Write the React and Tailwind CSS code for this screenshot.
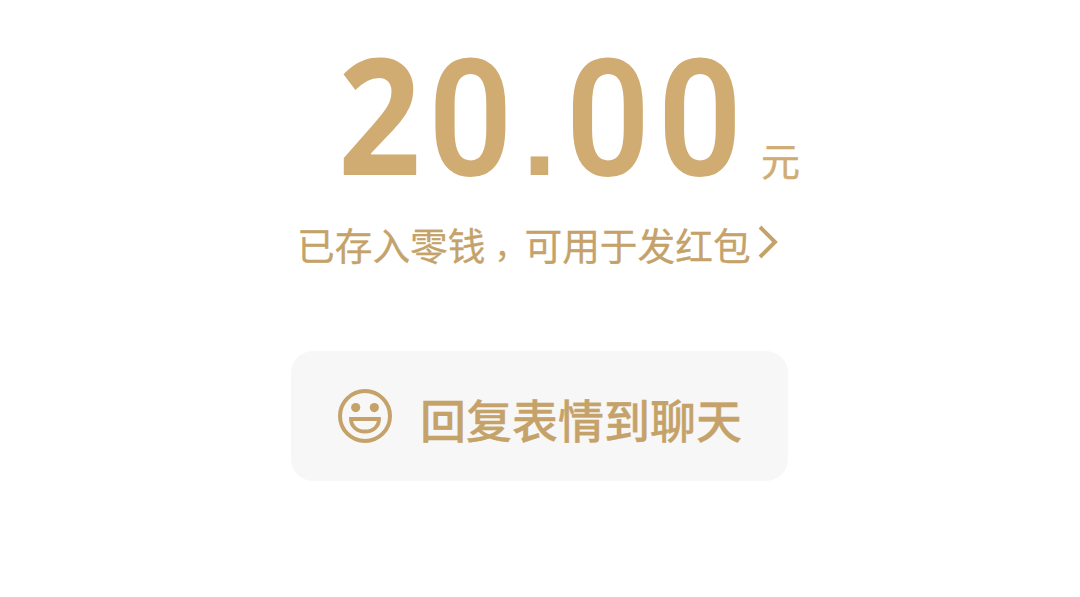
const App = () => {
    return (
        <div className="flex h-[597px] w-[1080px] flex-col bg-white font-['Noto_Sans_CJK_SC',sans-serif] text-[#c4a269] antialiased">
            {/* Amount */}
            <div className="mt-[33px] flex h-[172px] items-start pl-[335px] text-[#d0ac73]">
                <div className="flex w-[412px] items-start font-['Roboto',sans-serif] text-[164px] leading-[172px] font-[560]">
                    <span className="flex w-[89px] scale-x-[0.9] justify-center font-['Open_Sans',sans-serif] text-[161px] leading-[160px] font-[670]">2</span>
                    <span className="flex w-[93px] scale-x-[0.9] justify-center">0</span>
                    <span className="mt-[13px] flex w-[45px] justify-center font-['Liberation_Sans',sans-serif] text-[124px] font-bold">.</span>
                    <span className="flex w-[92px] scale-x-[0.9] justify-center">0</span>
                    <span className="flex w-[92px] scale-x-[0.9] justify-center">0</span>
                </div>
                <span className="mt-[98px] ml-[14px] text-[39px] leading-[56px] [-webkit-text-stroke:0.4px]">元</span>
            </div>

            {/* Wallet link */}
            <a href="#wallet" className="mt-[11px] ml-[297px] flex h-[56px] w-[484px] items-center">
                <span className="flex text-[37.7px] leading-[56px] whitespace-nowrap [-webkit-text-stroke:0.3px]">
                    <span>已存入零钱</span>
                    <span className="w-[39px] pl-[9px] text-[32px]">，</span>
                    <span>可用于发红包</span>
                </span>
                <svg className="-mt-[4px] ml-[7px] h-[36px] w-[24px] shrink-0" fill="none" stroke="currentColor" viewBox="0 0 24 36">
                    <path strokeWidth="4" d="M2 3L17 18L2 33" />
                </svg>
            </a>

            {/* Reply button */}
            <button className="mt-[79px] ml-[291px] flex h-[130px] w-[497px] items-center rounded-[22px] bg-[#f7f7f7] pl-[46px]">
                <svg className="h-[56px] w-[56px]" fill="none" stroke="currentColor" viewBox="0 0 56 56">
                    <circle cx="28" cy="28" r="25" strokeWidth="4" />
                    <circle cx="18.7" cy="19.6" r="4.6" fill="currentColor" stroke="none" />
                    <circle cx="37.3" cy="19.6" r="4.6" fill="currentColor" stroke="none" />
                    <path strokeWidth="3.8" d="M14 31H42C42 38.500 36 43.500 28 43.500C20 43.500 14 38.500 14 31Z" />
                </svg>
                <span className="mt-[3px] ml-[27px] text-[46px] leading-[64px] font-medium [-webkit-text-stroke:0.3px]">回复表情到聊天</span>
            </button>
        </div>
    );
};

export default App;
